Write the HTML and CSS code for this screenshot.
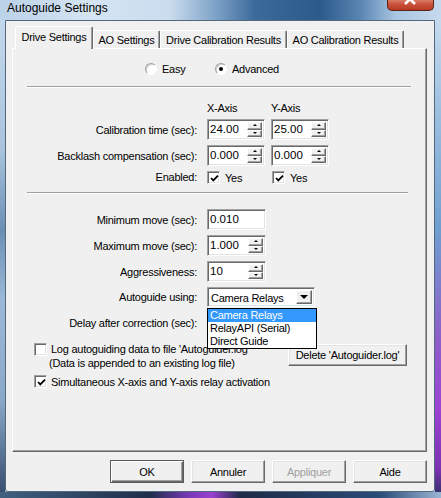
FILE: index.html
```html
<!DOCTYPE html>
<html>
<head>
<meta charset="utf-8">
<link rel="stylesheet" href="styles.css">
</head>
<body>
<div class="frame">
  <div class="titlebar">
    <span class="title">Autoguide Settings</span>
    <div class="close">
      <svg width="47" height="11" viewBox="0 0 47 11"><path d="M18 -6 L28 4 M28 -6 L18 4" stroke="#fff" stroke-width="2.6" fill="none"/></svg>
    </div>
  </div>
  <div class="client">
    <div class="tabs">
      <div class="tab active t1">Drive Settings</div>
      <div class="tab t2">AO Settings</div>
      <div class="tab t3">Drive Calibration Results</div>
      <div class="tab t4">AO Calibration Results</div>
    </div>
    <div class="panel">
      <div class="radios">
        <div class="opt opt1"><span class="radio"></span><span class="rlabel">Easy</span></div>
        <div class="opt"><span class="radio on"></span><span class="rlabel">Advanced</span></div>
      </div>
      <div class="sep sep1"></div>

      <div class="grid axes">
        <div></div>
        <div class="hdr">X-Axis</div>
        <div class="hdr">Y-Axis</div>

        <div class="lbl">Calibration time (sec):</div>
        <div class="edit spinw"><span class="val">24.00</span><span class="spin"><span class="sb up"><i></i></span><span class="sb dn"><i></i></span></span></div>
        <div class="edit spinw"><span class="val">25.00</span><span class="spin"><span class="sb up"><i></i></span><span class="sb dn"><i></i></span></span></div>

        <div class="lbl">Backlash compensation (sec):</div>
        <div class="edit spinw"><span class="val">0.000</span><span class="spin"><span class="sb up"><i></i></span><span class="sb dn"><i></i></span></span></div>
        <div class="edit spinw"><span class="val">0.000</span><span class="spin"><span class="sb up"><i></i></span><span class="sb dn"><i></i></span></span></div>

        <div class="lbl lblsm">Enabled:</div>
        <div class="chkwrap"><span class="chk"><svg width="9" height="9" viewBox="0 0 9 9"><path d="M1 4 L3.3 6.4 L8 1.6" stroke="#000" stroke-width="1.8" fill="none"/></svg></span><span class="clabel">Yes</span></div>
        <div class="chkwrap chky"><span class="chk"><svg width="9" height="9" viewBox="0 0 9 9"><path d="M1 4 L3.3 6.4 L8 1.6" stroke="#000" stroke-width="1.8" fill="none"/></svg></span><span class="clabel">Yes</span></div>
      </div>

      <div class="sep sep2"></div>

      <div class="grid moves">
        <div class="lbl">Minimum move (sec):</div>
        <div class="edit wide"><span class="val">0.010</span></div>

        <div class="lbl">Maximum move (sec):</div>
        <div class="edit wide spinw"><span class="val">1.000</span><span class="spin"><span class="sb up"><i></i></span><span class="sb dn"><i></i></span></span></div>

        <div class="lbl">Aggressiveness:</div>
        <div class="edit wide spinw"><span class="val">10</span><span class="spin"><span class="sb up"><i></i></span><span class="sb dn"><i></i></span></span></div>

        <div class="lbl">Autoguide using:</div>
        <div class="selcell">
          <div class="select"><span class="selval">Camera Relays</span><span class="dropbtn"><i></i></span></div>
          <div class="list">
            <div class="item hl">Camera Relays</div>
            <div class="item">RelayAPI (Serial)</div>
            <div class="item">Direct Guide</div>
          </div>
        </div>

        <div class="lbl">Delay after correction (sec):</div>
        <div class="edit wide"><span class="val"></span></div>
      </div>

      <div class="logrow">
        <div class="logleft">
          <span class="chk"></span>
          <div class="logtext">
            <div>Log autoguiding data to file 'Autoguider.log'</div>
            <div class="line2">(Data is appended to an existing log file)</div>
          </div>
        </div>
        <div class="btn delbtn">Delete 'Autoguider.log'</div>
      </div>

      <div class="simrow">
        <span class="chk"><svg width="9" height="9" viewBox="0 0 9 9"><path d="M1 4 L3.3 6.4 L8 1.6" stroke="#000" stroke-width="1.8" fill="none"/></svg></span>
        <span class="simtext">Simultaneous X-axis and Y-axis relay activation</span>
      </div>
    </div>
    <div class="buttons">
      <div class="btn def">OK</div>
      <div class="btn">Annuler</div>
      <div class="btn disabled">Appliquer</div>
      <div class="btn">Aide</div>
    </div>
  </div>
</div>
</body>
</html>
```

FILE: styles.css
```css
html, body {
  margin: 0;
  padding: 0;
}
body {
  width: 441px;
  height: 498px;
  overflow: hidden;
  font-family: "Liberation Sans", Arial, sans-serif;
  font-size: 11px;
  letter-spacing: -0.25px;
  color: #000;
}
.frame {
  width: 441px;
  height: 498px;
  display: flex;
  flex-direction: column;
  background:
    linear-gradient(to right, #bcd2e8 0, #d4e4f2 90px, #cadcee 170px, #7ea3c8 215px, #3c6a99 255px, #2c5a8a 320px, #5985b2 360px, #a8c5e2 395px, #c6daed 441px) left top / 100% 20px no-repeat,
    linear-gradient(to right, #40607f 0, #1f2f4b 150px, #7a3ab8 190px, #9a40d0 212px, #1d2b47 240px, #2a4c78 380px, #9ab6d4 441px) left bottom / 100% 6px no-repeat,
    linear-gradient(to bottom, #c8dbed 0, #a9c3dd 150px, #6b8fb4 230px, #9bb9d7 300px, #8aa8c7 400px, #33496a 498px) left top / 5px 100% no-repeat,
    linear-gradient(to bottom, #cfe0f0 0, #9ec0e0 110px, #6f9fd0 230px, #8a63c9 330px, #9d42d4 410px, #7a32b0 470px, #2a3060 498px) right top / 6px 100% no-repeat,
    #9fbddb;
}
.titlebar {
  height: 20px;
  display: flex;
  align-items: flex-start;
}
.title {
  font-size: 12px;
  letter-spacing: 0;
  line-height: 14px;
  padding: 1px 0 0 7px;
  color: #000;
}
.close {
  margin-left: auto;
  margin-right: 7px;
  width: 47px;
  height: 11px;
  box-sizing: border-box;
  border: 1px solid #5b2418;
  border-top: none;
  border-radius: 0 0 5px 5px;
  background: linear-gradient(to bottom, #d97c66 0, #c9503a 45%, #b83a23 100%);
  overflow: hidden;
}
.close svg {
  display: block;
  margin-left: -1px;
}
.client {
  margin: 0 6px 0 5px;
  width: 430px;
  height: 472px;
  box-sizing: border-box;
  border: 1px solid #51687f;
  border-radius: 0 0 3px 3px;
  background: #f0f0f0;
  display: flex;
  flex-direction: column;
}
.tabs {
  display: flex;
  align-items: flex-end;
  height: 22px;
  margin-top: 5px;
  padding-left: 9px;
  position: relative;
  z-index: 1;
}
.tab {
  box-sizing: border-box;
  height: 18px;
  line-height: 17px;
  padding-top: 1px;
  text-align: center;
  background: #f0f0f0;
  border-top: 1px solid #fff;
  border-left: 1px solid #fff;
  border-right: 1px solid #696969;
  box-shadow: inset -1px 0 #a0a0a0;
  border-radius: 2px 2px 0 0;
}
.tab.active {
  height: 23px;
  margin-bottom: -1px;
  line-height: 20px;
  padding-top: 0;
}
.t1 { width: 78px; }
.t2 { width: 67px; }
.t3 { width: 127px; }
.t4 { width: 117px; }
.panel {
  margin-left: 6px;
  width: 415px;
  height: 404px;
  box-sizing: border-box;
  border-top: 1px solid #fff;
  border-left: 1px solid #fff;
  border-right: 1px solid #696969;
  border-bottom: 1px solid #696969;
  box-shadow: inset -1px -1px #a0a0a0;
  padding-top: 13px;
}
.radios {
  display: flex;
  align-items: center;
  height: 14px;
  padding-left: 132px;
}
.opt {
  display: flex;
  align-items: center;
}
.opt1 {
  width: 70px;
}
.radio {
  width: 12px;
  height: 12px;
  box-sizing: border-box;
  border-radius: 50%;
  background: #fff;
  border: 1px solid;
  border-color: #a0a0a0 #fff #fff #a0a0a0;
  box-shadow: inset 1px 1px #d0d0d0;
  position: relative;
}
.radio.on::after {
  content: "";
  position: absolute;
  left: 3px;
  top: 3px;
  width: 4px;
  height: 4px;
  border-radius: 50%;
  background: #000;
}
.rlabel {
  margin-left: 5px;
}
.sep {
  height: 0;
  border-top: 1px solid #a0a0a0;
  border-bottom: 1px solid #fff;
}
.sep1 {
  margin: 10px 15px 0 14px;
}
.sep2 {
  margin: 8px 18px 0 14px;
}
.grid {
  display: grid;
  grid-template-columns: 194px 64px 64px;
  row-gap: 5px;
  align-items: center;
}
.axes {
  margin-top: 14px;
  grid-template-rows: 12px 21px 21px 13px;
}
.moves {
  margin-top: 15px;
  grid-template-columns: 194px 120px;
  grid-template-rows: 21px 21px 21px 20px 21px;
}
.hdr {
  line-height: 12px;
}
.lbl {
  text-align: right;
  padding-right: 10px;
  white-space: nowrap;
}
.edit {
  box-sizing: border-box;
  width: 58px;
  height: 21px;
  background: #fff;
  border: 1px solid;
  border-color: #a0a0a0 #fff #fff #a0a0a0;
  box-shadow: inset 1px 1px #696969, inset -1px -1px #e3e3e3;
  display: flex;
  padding: 2px;
}
.edit.wide {
  width: 59px;
}
.val {
  flex: 1;
  line-height: 14px;
  font-size: 11.5px;
  letter-spacing: 0;
}
.spin {
  width: 15px;
  display: flex;
  flex-direction: column;
}
.sb {
  flex: 1;
  box-sizing: border-box;
  background: #f0f0f0;
  border: 1px solid;
  border-color: #fff #696969 #696969 #fff;
  box-shadow: inset -1px -1px #a0a0a0;
  display: flex;
  align-items: center;
  justify-content: center;
}
.sb i {
  display: block;
  width: 0;
  height: 0;
  border-left: 2px solid transparent;
  border-right: 2px solid transparent;
}
.sb.up i {
  border-bottom: 2px solid #000;
  margin-top: -1px;
}
.sb.dn i {
  border-top: 2px solid #000;
  margin-top: -1px;
}
.chkwrap {
  display: flex;
  align-items: center;
}
.chky {
  margin-left: 1px;
}
.chk {
  width: 13px;
  height: 13px;
  flex: none;
  box-sizing: border-box;
  background: #fff;
  border: 1px solid;
  border-color: #a0a0a0 #fff #fff #a0a0a0;
  box-shadow: inset 1px 1px #696969, inset -1px -1px #e3e3e3;
  display: flex;
  align-items: center;
  justify-content: center;
}
.chk svg {
  display: block;
  margin: 1px 0 0 1px;
}
.clabel {
  margin-left: 5px;
}
.lblsm {
  line-height: 13px;
}
.selcell {
  position: relative;
  height: 20px;
}
.select {
  box-sizing: border-box;
  width: 108px;
  height: 20px;
  background: #fff;
  border: 1px solid;
  border-color: #a0a0a0 #fff #fff #a0a0a0;
  box-shadow: inset 1px 1px #696969, inset -1px -1px #e3e3e3;
  display: flex;
  padding: 2px;
}
.selval {
  flex: 1;
  line-height: 16px;
  padding-left: 1px;
}
.dropbtn {
  width: 16px;
  box-sizing: border-box;
  background: #f0f0f0;
  border: 1px solid;
  border-color: #fff #696969 #696969 #fff;
  box-shadow: inset -1px -1px #a0a0a0;
  display: flex;
  align-items: center;
  justify-content: center;
}
.dropbtn i {
  display: block;
  width: 0;
  height: 0;
  border-left: 4px solid transparent;
  border-right: 4px solid transparent;
  border-top: 4px solid #000;
}
.list {
  position: absolute;
  left: 0;
  top: 21px;
  width: 110px;
  box-sizing: border-box;
  border: 1px solid #000;
  background: #fff;
  z-index: 5;
}
.item {
  height: 13px;
  line-height: 13px;
  padding-left: 2px;
  white-space: nowrap;
}
.item.hl {
  background: #3399ff;
  color: #fff;
}
.logrow {
  display: flex;
  align-items: flex-start;
  margin-top: 10px;
  padding-left: 21px;
}
.logleft {
  width: 254px;
  display: flex;
  align-items: flex-start;
}
.logtext {
  margin-left: 4px;
  line-height: 14px;
  margin-top: -1px;
}
.line2 {
  margin-left: -2px;
}
.btn {
  box-sizing: border-box;
  width: 74px;
  height: 23px;
  background: #f0f0f0;
  border: 1px solid;
  border-color: #fff #696969 #696969 #fff;
  box-shadow: inset -1px -1px #a0a0a0, inset 1px 1px #e3e3e3;
  display: flex;
  align-items: center;
  justify-content: center;
  white-space: nowrap;
}
.btn.def {
  border: 1px solid #5a5a5a;
  box-shadow: inset 1px 1px #fff, inset -1px -1px #696969, inset -2px -2px #a0a0a0;
}
.btn.disabled {
  color: #a0a0a0;
}
.delbtn {
  width: 119px;
  height: 22px;
  margin-top: 1px;
}
.simrow {
  display: flex;
  align-items: center;
  margin-top: 5px;
  padding-left: 21px;
}
.simtext {
  margin-left: 4px;
}
.buttons {
  display: flex;
  justify-content: flex-end;
  gap: 7px;
  margin-top: 8px;
  padding-right: 7px;
}
```
